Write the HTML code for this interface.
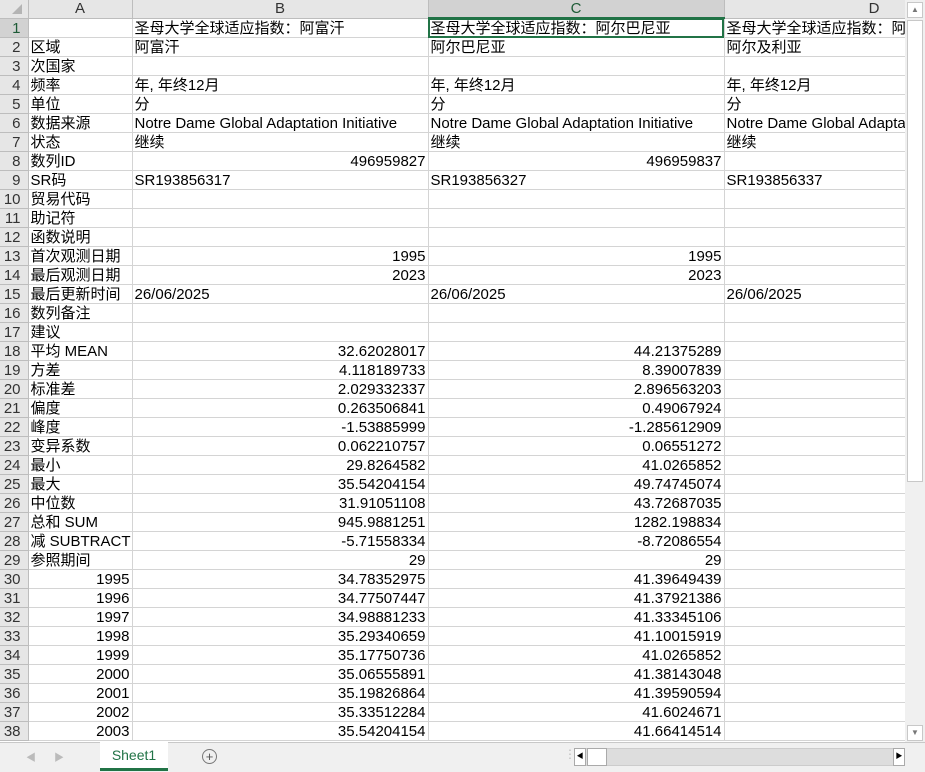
<!DOCTYPE html><html><head><meta charset="utf-8"><style>
body{margin:0;width:925px;height:771px;overflow:hidden;background:#fff;font-family:"Liberation Sans","Noto Sans CJK SC",sans-serif;font-size:15px;color:#000;position:relative}
table{position:absolute;left:0;top:0;border-collapse:collapse;table-layout:fixed;width:905px}
td{height:19px;padding:1px 2px 0 2px;border-right:1px solid #d4d4d4;border-bottom:1px solid #d4d4d4;white-space:nowrap;overflow:hidden;line-height:17px;box-sizing:border-box}
tr{height:19px}
tr.hd{height:18px}
tr.hd td{height:18px;line-height:17px;padding-top:0}
td.h{background:#e6e6e6;color:#333;text-align:center;border-color:#bdbdbd}
td.rh{background:#e6e6e6;color:#333;text-align:right;padding-right:7px;border-color:#bdbdbd}
.r{text-align:right}
.sel{background:#d2d2d2!important;color:#1d5b36!important;border-bottom:2px solid #217346!important}
#vs{position:absolute;left:905px;top:0;width:20px;height:742px;background:#f0f0f0}
#bot{position:absolute;left:0;top:742px;width:925px;height:29px;background:#f0f0f0;border-top:1px solid #c8c8c8}
</style></head><body>
<table>
<colgroup><col style="width:28px"><col style="width:104px"><col style="width:296px"><col style="width:296px"><col style="width:181px"></colgroup>
<tr class="hd"><td class="h" style="padding:0"><svg width="28" height="17" style="display:block"><polygon points="22,4 22,14 12,14" fill="#b4b4b4"/></svg></td><td class="h">A</td><td class="h">B</td><td class="h sel">C</td><td class="h" style="text-align:right;padding-right:25px">D</td></tr>
<tr><td class="rh sel" style="border-bottom:1px solid #bdbdbd!important">1</td><td></td><td>圣母大学全球适应指数：阿富汗</td><td style="outline:2px solid #217346;outline-offset:-2px">圣母大学全球适应指数：阿尔巴尼亚</td><td>圣母大学全球适应指数：阿</td></tr>
<tr><td class="rh">2</td><td>区域</td><td>阿富汗</td><td>阿尔巴尼亚</td><td>阿尔及利亚</td></tr>
<tr><td class="rh">3</td><td>次国家</td><td></td><td></td><td></td></tr>
<tr><td class="rh">4</td><td>频率</td><td>年, 年终12月</td><td>年, 年终12月</td><td>年, 年终12月</td></tr>
<tr><td class="rh">5</td><td>单位</td><td>分</td><td>分</td><td>分</td></tr>
<tr><td class="rh">6</td><td>数据来源</td><td>Notre Dame Global Adaptation Initiative</td><td>Notre Dame Global Adaptation Initiative</td><td>Notre Dame Global Adaptation Initiative</td></tr>
<tr><td class="rh">7</td><td>状态</td><td>继续</td><td>继续</td><td>继续</td></tr>
<tr><td class="rh">8</td><td>数列ID</td><td class="r">496959827</td><td class="r">496959837</td><td></td></tr>
<tr><td class="rh">9</td><td>SR码</td><td>SR193856317</td><td>SR193856327</td><td>SR193856337</td></tr>
<tr><td class="rh">10</td><td>贸易代码</td><td></td><td></td><td></td></tr>
<tr><td class="rh">11</td><td>助记符</td><td></td><td></td><td></td></tr>
<tr><td class="rh">12</td><td>函数说明</td><td></td><td></td><td></td></tr>
<tr><td class="rh">13</td><td>首次观测日期</td><td class="r">1995</td><td class="r">1995</td><td></td></tr>
<tr><td class="rh">14</td><td>最后观测日期</td><td class="r">2023</td><td class="r">2023</td><td></td></tr>
<tr><td class="rh">15</td><td>最后更新时间</td><td>26/06/2025</td><td>26/06/2025</td><td>26/06/2025</td></tr>
<tr><td class="rh">16</td><td>数列备注</td><td></td><td></td><td></td></tr>
<tr><td class="rh">17</td><td>建议</td><td></td><td></td><td></td></tr>
<tr><td class="rh">18</td><td>平均 MEAN</td><td class="r">32.62028017</td><td class="r">44.21375289</td><td></td></tr>
<tr><td class="rh">19</td><td>方差</td><td class="r">4.118189733</td><td class="r">8.39007839</td><td></td></tr>
<tr><td class="rh">20</td><td>标准差</td><td class="r">2.029332337</td><td class="r">2.896563203</td><td></td></tr>
<tr><td class="rh">21</td><td>偏度</td><td class="r">0.263506841</td><td class="r">0.49067924</td><td></td></tr>
<tr><td class="rh">22</td><td>峰度</td><td class="r">-1.53885999</td><td class="r">-1.285612909</td><td></td></tr>
<tr><td class="rh">23</td><td>变异系数</td><td class="r">0.062210757</td><td class="r">0.06551272</td><td></td></tr>
<tr><td class="rh">24</td><td>最小</td><td class="r">29.8264582</td><td class="r">41.0265852</td><td></td></tr>
<tr><td class="rh">25</td><td>最大</td><td class="r">35.54204154</td><td class="r">49.74745074</td><td></td></tr>
<tr><td class="rh">26</td><td>中位数</td><td class="r">31.91051108</td><td class="r">43.72687035</td><td></td></tr>
<tr><td class="rh">27</td><td>总和 SUM</td><td class="r">945.9881251</td><td class="r">1282.198834</td><td></td></tr>
<tr><td class="rh">28</td><td>减 SUBTRACT</td><td class="r">-5.71558334</td><td class="r">-8.72086554</td><td></td></tr>
<tr><td class="rh">29</td><td>参照期间</td><td class="r">29</td><td class="r">29</td><td></td></tr>
<tr><td class="rh">30</td><td class="r">1995</td><td class="r">34.78352975</td><td class="r">41.39649439</td><td></td></tr>
<tr><td class="rh">31</td><td class="r">1996</td><td class="r">34.77507447</td><td class="r">41.37921386</td><td></td></tr>
<tr><td class="rh">32</td><td class="r">1997</td><td class="r">34.98881233</td><td class="r">41.33345106</td><td></td></tr>
<tr><td class="rh">33</td><td class="r">1998</td><td class="r">35.29340659</td><td class="r">41.10015919</td><td></td></tr>
<tr><td class="rh">34</td><td class="r">1999</td><td class="r">35.17750736</td><td class="r">41.0265852</td><td></td></tr>
<tr><td class="rh">35</td><td class="r">2000</td><td class="r">35.06555891</td><td class="r">41.38143048</td><td></td></tr>
<tr><td class="rh">36</td><td class="r">2001</td><td class="r">35.19826864</td><td class="r">41.39590594</td><td></td></tr>
<tr><td class="rh">37</td><td class="r">2002</td><td class="r">35.33512284</td><td class="r">41.6024671</td><td></td></tr>
<tr><td class="rh">38</td><td class="r">2003</td><td class="r">35.54204154</td><td class="r">41.66414514</td><td></td></tr>
</table>
<div id="vs">
<div style="position:absolute;left:2px;top:2px;width:16px;height:16px;background:#fff;border:1px solid #c8c8c8;box-sizing:border-box;font-size:8px;color:#777;text-align:center;line-height:14px">▲</div>
<div style="position:absolute;left:2px;top:20px;width:16px;height:462px;background:#fff;border:1px solid #c8c8c8;box-sizing:border-box"></div>
<div style="position:absolute;left:2px;top:725px;width:16px;height:16px;background:#fff;border:1px solid #c8c8c8;box-sizing:border-box;font-size:8px;color:#777;text-align:center;line-height:14px">▼</div>
</div>
<div id="bot">
<span style="position:absolute;left:26px;top:6px;color:#bbb;font-size:10px">◀</span>
<span style="position:absolute;left:54px;top:6px;color:#bbb;font-size:10px">▶</span>
<div style="position:absolute;left:100px;top:-1px;width:68px;height:26px;background:#fff;border-bottom:3px solid #217346;color:#217346;text-align:center;line-height:26px;font-size:14px">Sheet1</div>
<div style="position:absolute;left:202px;top:6px;width:13px;height:13px;border:1px solid #777;border-radius:50%;text-align:center;line-height:13px;color:#555;font-size:13px">+</div>
<span style="position:absolute;left:564px;top:4px;color:#bbb;font-size:12px">⋮</span>
<div style="position:absolute;left:574px;top:5px;width:331px;height:18px;background:#ddd;border:1px solid #ccc;box-sizing:border-box"></div>
<div style="position:absolute;left:574px;top:5px;width:12px;height:18px;background:#fff;border:1px solid #aaa;box-sizing:border-box;font-size:7px;line-height:16px;text-align:center">◀</div>
<div style="position:absolute;left:587px;top:5px;width:20px;height:18px;background:#fff;border:1px solid #aaa;box-sizing:border-box"></div>
<div style="position:absolute;left:893px;top:5px;width:12px;height:18px;background:#fff;border:1px solid #aaa;box-sizing:border-box;font-size:7px;line-height:16px;text-align:center">▶</div>
</div>
</body></html>
